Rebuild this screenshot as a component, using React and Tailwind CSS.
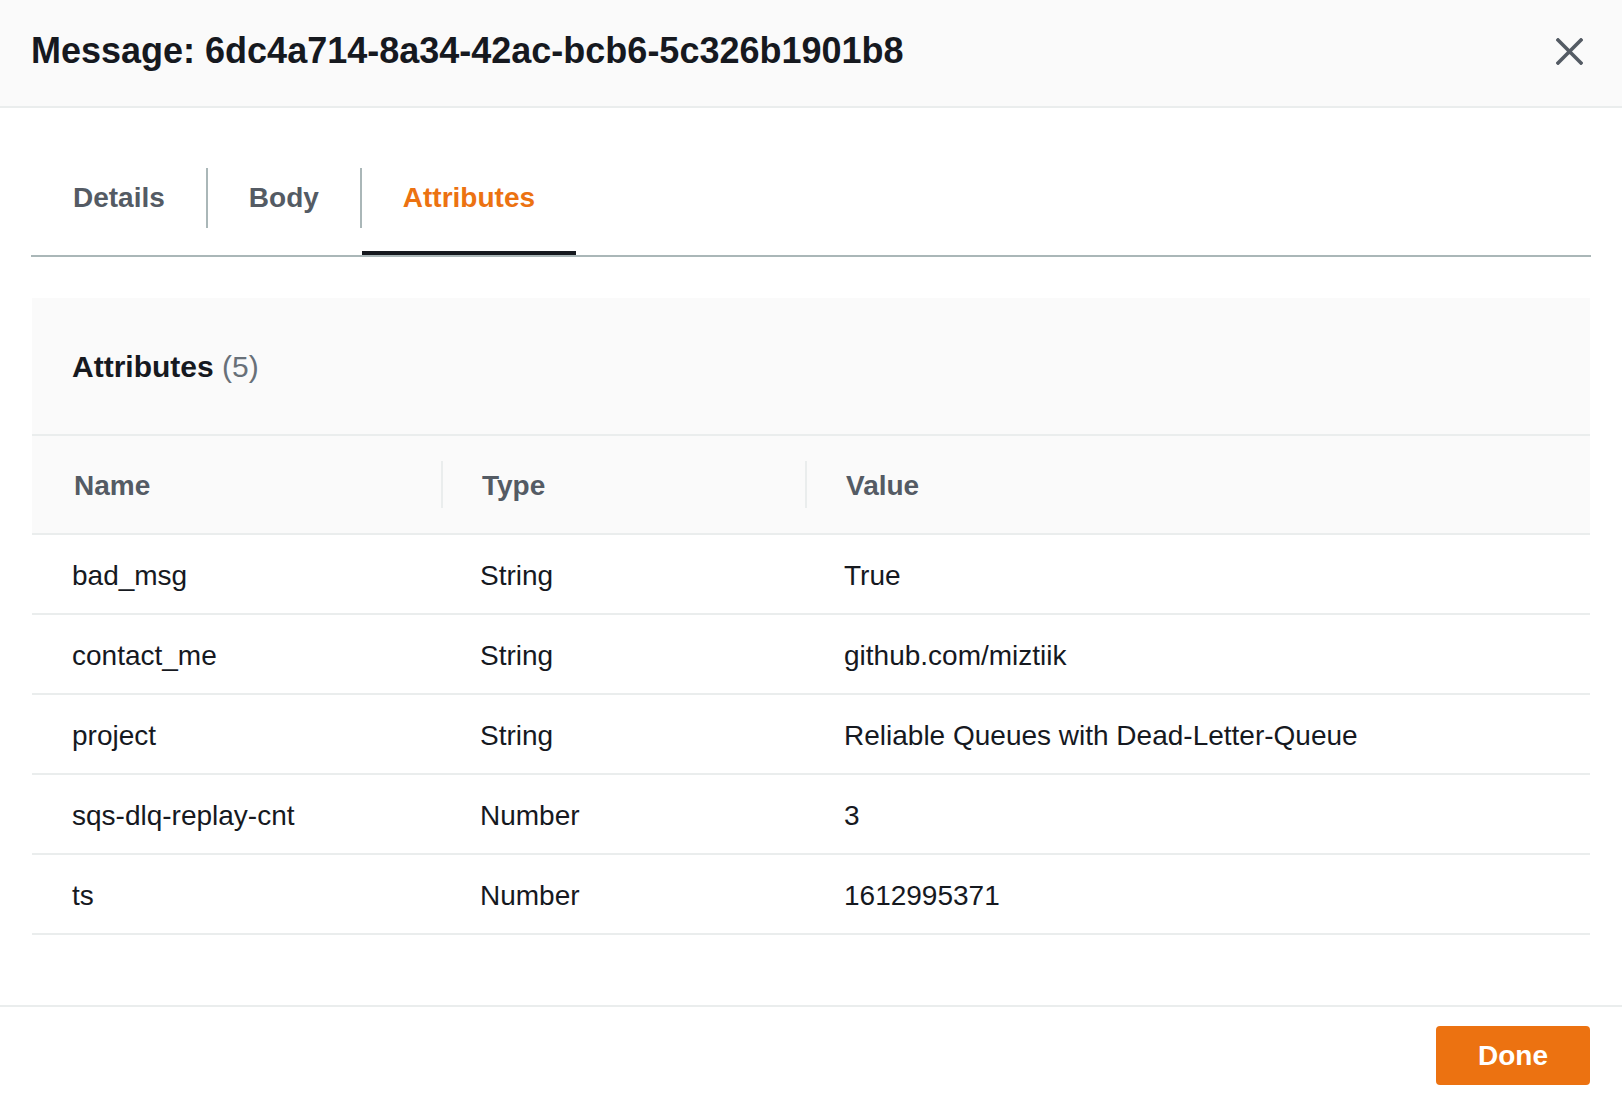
import { useState } from 'react';

const rows = [
  { name: 'bad_msg', type: 'String', value: 'True' },
  { name: 'contact_me', type: 'String', value: 'github.com/miztiik' },
  { name: 'project', type: 'String', value: 'Reliable Queues with Dead-Letter-Queue' },
  { name: 'sqs-dlq-replay-cnt', type: 'Number', value: '3' },
  { name: 'ts', type: 'Number', value: '1612995371' },
];

const tabs = ['Details', 'Body', 'Attributes'];

const Tab = ({ label, active, onClick }) => (
  <button
    onClick={onClick}
    className={`h-[87px] px-[41px] flex items-start border-b-4 text-[28px] font-bold ${
      active ? 'border-[#16191f] text-[#ec7211]' : 'border-transparent text-[#545b64]'
    }`}
  >
    <span className="h-[60px] flex items-center">{label}</span>
  </button>
);

const App = () => {
  const [tab, setTab] = useState('Attributes');

  return (
    <div className="w-[1622px] h-[1102px] bg-white text-[#16191f] overflow-hidden" style={{ fontFamily: '"Liberation Sans", Arial, sans-serif' }}>
      <div className="h-[108px] bg-[#fafafa] border-b-2 border-[#eaeded] flex items-center justify-between pl-[31px] pr-[39px] pb-[5px]">
        <h2 className="text-[36px] font-bold leading-none">Message: 6dc4a714-8a34-42ac-bcb6-5c326b1901b8</h2>
        <button className="text-[#545b64] mt-[2px]">
          <svg width="27" height="27" viewBox="0 0 27 27" fill="none" stroke="currentColor" strokeWidth="3.6" strokeLinecap="square">
            <path d="M2 2L25 25M25 2L2 25" />
          </svg>
        </button>
      </div>

      <div className="mx-[31px] mt-[60px] flex border-b-2 border-[#aab7b8] pl-px">
        {tabs.map((t, i) => (
          <div key={t} className="flex">
            {i > 0 && <div className="w-[2px] h-[60px] bg-[#aab7b8]" />}
            <Tab label={t} active={tab === t} onClick={() => setTab(t)} />
          </div>
        ))}
      </div>

      <div className="mx-[32px] mt-[41px] bg-white">
        <div className="h-[138px] bg-[#fafafa] border-b-2 border-[#eaeded] flex items-center px-[40px]">
          <h3 className="text-[30px] font-bold">
            Attributes <span className="font-normal text-[#687078]">(5)</span>
          </h3>
        </div>
        <div className="grid grid-cols-[409px_364px_1fr] h-[99px] bg-[#fafafa] border-b-2 border-[#eaeded] text-[28px] font-bold text-[#545b64]">
          <div className="flex items-center pl-[42px] pt-[3px]">Name</div>
          <div className="flex items-center">
            <span className="w-[2px] h-[47px] bg-[#eaeded]" />
            <span className="pl-[39px] pt-[3px]">Type</span>
          </div>
          <div className="flex items-center">
            <span className="w-[2px] h-[47px] bg-[#eaeded]" />
            <span className="pl-[39px] pt-[3px]">Value</span>
          </div>
        </div>
        {rows.map((r) => (
          <div key={r.name} className="grid grid-cols-[409px_364px_1fr] h-[80px] border-b-2 border-[#eaeded] text-[28px]">
            <div className="flex items-center pl-[40px] pt-[4px]">{r.name}</div>
            <div className="flex items-center pl-[39px] pt-[4px]">{r.type}</div>
            <div className="flex items-center pl-[39px] pt-[4px]">{r.value}</div>
          </div>
        ))}
      </div>

      <div className="mt-[70px] border-t-2 border-[#eaeded] flex justify-end pr-[32px] pt-[19px]">
        <button className="h-[59px] px-[42px] bg-[#ec7211] rounded-[4px] text-white text-[28px] font-bold">Done</button>
      </div>
    </div>
  );
};

export default App;
